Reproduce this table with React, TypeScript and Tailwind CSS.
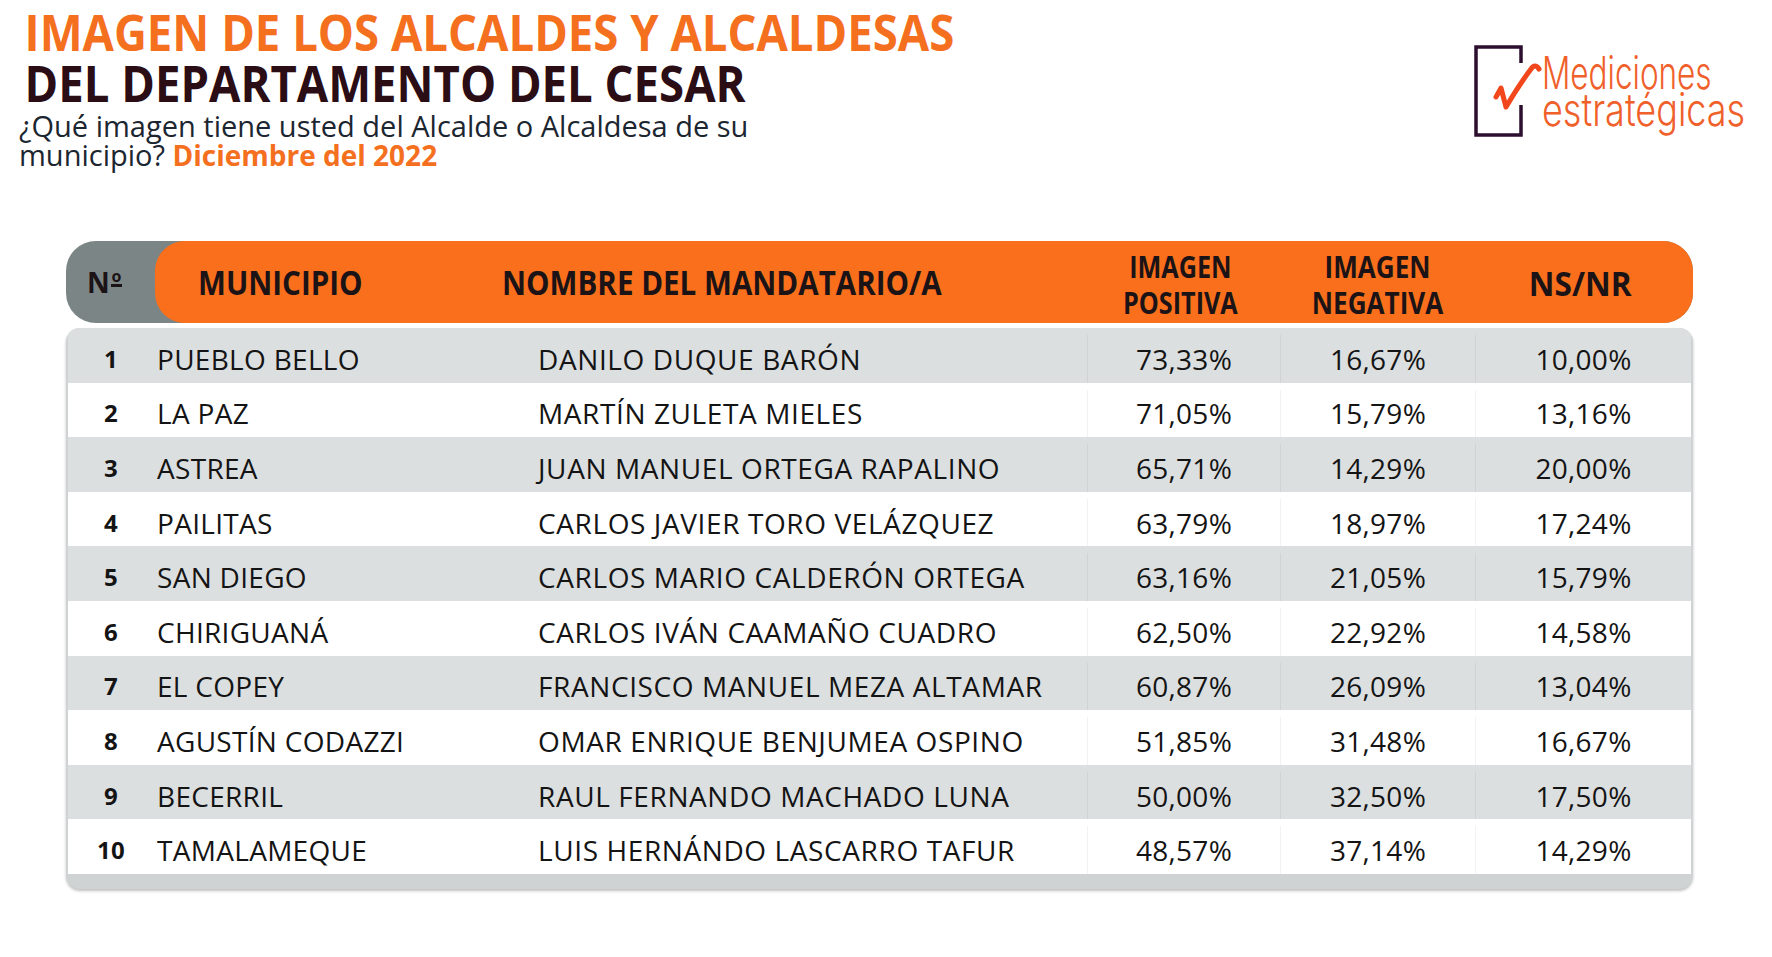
import React from 'react'

type Row = {
  n: number
  municipio: string
  nombre: string
  positiva: string
  negativa: string
  nsnr: string
}

const rows: Row[] = [
  { n: 1, municipio: 'PUEBLO BELLO', nombre: 'DANILO DUQUE BARÓN', positiva: '73,33%', negativa: '16,67%', nsnr: '10,00%' },
  { n: 2, municipio: 'LA PAZ', nombre: 'MARTÍN ZULETA MIELES', positiva: '71,05%', negativa: '15,79%', nsnr: '13,16%' },
  { n: 3, municipio: 'ASTREA', nombre: 'JUAN MANUEL ORTEGA RAPALINO', positiva: '65,71%', negativa: '14,29%', nsnr: '20,00%' },
  { n: 4, municipio: 'PAILITAS', nombre: 'CARLOS JAVIER TORO VELÁZQUEZ', positiva: '63,79%', negativa: '18,97%', nsnr: '17,24%' },
  { n: 5, municipio: 'SAN DIEGO', nombre: 'CARLOS MARIO CALDERÓN ORTEGA', positiva: '63,16%', negativa: '21,05%', nsnr: '15,79%' },
  { n: 6, municipio: 'CHIRIGUANÁ', nombre: 'CARLOS IVÁN CAAMAÑO CUADRO', positiva: '62,50%', negativa: '22,92%', nsnr: '14,58%' },
  { n: 7, municipio: 'EL COPEY', nombre: 'FRANCISCO MANUEL MEZA ALTAMAR', positiva: '60,87%', negativa: '26,09%', nsnr: '13,04%' },
  { n: 8, municipio: 'AGUSTÍN CODAZZI', nombre: 'OMAR ENRIQUE BENJUMEA OSPINO', positiva: '51,85%', negativa: '31,48%', nsnr: '16,67%' },
  { n: 9, municipio: 'BECERRIL', nombre: 'RAUL FERNANDO MACHADO LUNA', positiva: '50,00%', negativa: '32,50%', nsnr: '17,50%' },
  { n: 10, municipio: 'TAMALAMEQUE', nombre: 'LUIS HERNÁNDO LASCARRO TAFUR', positiva: '48,57%', negativa: '37,14%', nsnr: '14,29%' },
]

function Logo() {
  return (
    <div className="mt-[45px] flex w-[272px] shrink-0 items-start">
      <svg width="70" height="92" viewBox="0 0 70 92" fill="none" className="shrink-0">
        <path d="M47 18 L47 2 L2 2 L2 90 L47 90 L47 60" stroke="#2c0f2f" strokeWidth="3.5" />
        <path
          d="M22 52 L27 43 L32 62 Q45 40 57 24 Q61 18 65 24"
          stroke="#f2471c"
          strokeWidth="5"
          strokeLinecap="round"
          strokeLinejoin="round"
        />
      </svg>
      <div className="-ml-[2px] mt-[5px] flex flex-col font-['Inter',sans-serif] font-light text-[#f0602a]">
        <div className="origin-left scale-x-[0.7] whitespace-nowrap text-[45px] leading-[45px]">Mediciones</div>
        <div className="-mt-[8px] origin-left scale-x-[0.8] whitespace-nowrap text-[45px] leading-[45px]">estratégicas</div>
      </div>
    </div>
  )
}

export default function App() {
  return (
    <div className="h-[957px] w-[1772px] overflow-hidden bg-white font-['Open_Sans','Noto_Sans',sans-serif] text-[#141414]">
      <div className="flex justify-between pr-[26px]">
        <div>
          <div className="origin-left scale-x-[0.91] whitespace-nowrap pl-[27px] pt-[7px] text-[50px] font-bold leading-[51px]">
            <div className="text-[#f4701f]">IMAGEN DE LOS ALCALDES Y ALCALDESAS</div>
            <div className="text-[#2a0d15]">DEL DEPARTAMENTO DEL CESAR</div>
          </div>
          <div className="mt-[2px] whitespace-nowrap pl-[19px] text-[29px] leading-[29px] text-[#1c2630]">
            <div>¿Qué imagen tiene usted del Alcalde o Alcaldesa de su</div>
            <div>
              municipio? <span className="text-[28px] font-bold text-[#f4701f]">Diciembre del 2022</span>
            </div>
          </div>
        </div>
        <Logo />
      </div>

      <div className="ml-[66px] mt-[71px] w-[1627px]">
        <div className="flex h-[82px] rounded-[30px] bg-[#7c8585] font-bold text-[#1b1315]">
          <div className="flex w-[89px] items-center justify-center pr-[12px] text-[28px]">
            <span className="flex items-start">
              N
              <span className="ml-[1px] mt-[9px] flex flex-col items-center">
                <span className="text-[16px] leading-[12px]">o</span>
                <span className="mt-[2px] h-[3px] w-[11px] bg-current" />
              </span>
            </span>
          </div>
          <div className="flex flex-1 items-center rounded-[30px] bg-[#f96f1c]">
            <div className="w-[347px] whitespace-nowrap pl-[43px] text-[34px]">
              <span className="inline-block origin-left scale-x-[0.87]">MUNICIPIO</span>
            </div>
            <div className="w-[585px] whitespace-nowrap text-[34px]">
              <span className="inline-block origin-left scale-x-[0.87]">NOMBRE DEL MANDATARIO/A</span>
            </div>
            <div className="w-[193px] pr-[6px] pt-[5px] text-center text-[30px] leading-[36px]">
              <span className="inline-block scale-x-[0.84]">
                IMAGEN
                <br />
                POSITIVA
              </span>
            </div>
            <div className="w-[195px] pt-[5px] text-center text-[30px] leading-[36px]">
              <span className="inline-block scale-x-[0.87]">
                IMAGEN
                <br />
                NEGATIVA
              </span>
            </div>
            <div className="flex-1 pr-[8px] pt-[2px] text-center text-[34px]">
              <span className="inline-block scale-x-[0.93]">NS/NR</span>
            </div>
          </div>
        </div>

        <div className="mt-[5px] overflow-hidden rounded-[14px] bg-[#cfd3d3] px-[2px] pb-[15px] shadow-[0_2px_3px_rgba(0,0,0,0.25)]">
          {rows.map((r, i) => (
            <div
              key={r.n}
              className={`grid h-[54.6px] grid-cols-[86px_384px_549px_193px_195px_1fr] items-center pt-[7px] text-[28px] tracking-[0.3px] ${
                i % 2 === 0 ? 'bg-[#dcdfe0]' : 'bg-white'
              }`}
            >
              <div className="text-center text-[24px] font-bold">{r.n}</div>
              <div className="pl-[3px]">{r.municipio}</div>
              <div className="tracking-[0.6px]">{r.nombre}</div>
              <div className="flex h-full items-center justify-center border-l border-black/5">{r.positiva}</div>
              <div className="flex h-full items-center justify-center border-l border-black/5">{r.negativa}</div>
              <div className="flex h-full items-center justify-center border-l border-black/5">{r.nsnr}</div>
            </div>
          ))}
        </div>
      </div>
    </div>
  )
}
